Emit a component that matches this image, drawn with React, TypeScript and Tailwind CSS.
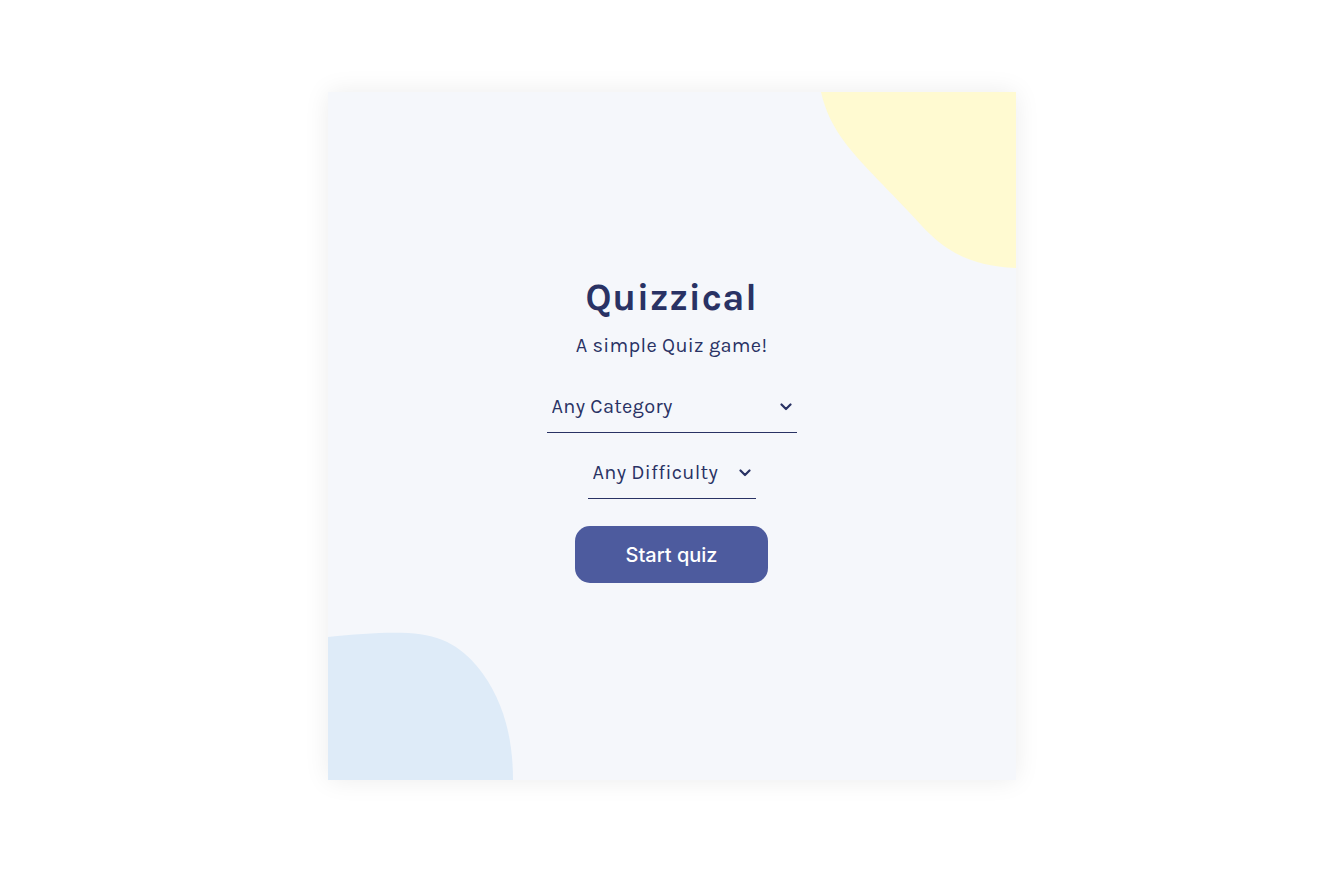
import React, { useState } from "react";

const categories = ["Any Category", "General Knowledge", "Books", "Film", "Music", "Science & Nature"];
const difficulties = ["Any Difficulty", "Easy", "Medium", "Hard"];

const Chevron = () => (
  <svg width="12" height="8" viewBox="0 0 12 8" className="pointer-events-none absolute right-[5px] top-[21px]">
    <path d="M1.5 1.5 L6 6 L10.5 1.5" fill="none" stroke="#293264" strokeWidth="2.2" strokeLinecap="round" strokeLinejoin="round" />
  </svg>
);

export default function App() {
  const [category, setCategory] = useState("Any Category");
  const [difficulty, setDifficulty] = useState("Any Difficulty");

  return (
    <div className="min-h-screen w-full bg-white flex items-center justify-center font-['Karla','Inter',sans-serif]">
      <div className="relative w-[688px] h-[688px] bg-[#F5F7FB] overflow-hidden shadow-[0_0_24px_rgba(0,0,0,0.08)] flex flex-col items-center justify-center">
        {/* Blobs */}
        <svg className="absolute top-0 right-0" width="195" height="176" viewBox="0 0 195 176">
          <path d="M0 0 H195 V176 C150 174 125 160 100 133 C70 100 40 72 25 52 C12 35 4 18 0 0 Z" fill="#FFFAD1" />
        </svg>
        <svg className="absolute bottom-0 left-0" width="186" height="148" viewBox="0 0 186 148">
          <path d="M0 5 C30 2 55 0 80 1 C115 3 135 15 155 42 C175 70 185 105 185 148 H0 Z" fill="#DEEBF8" />
        </svg>

        <div className="relative flex flex-col items-center pb-[10px]">
          <h1 className="text-[38px] font-bold text-[#293264] leading-none tracking-[0.6px]">Quizzical</h1>
          <p className="mt-[19px] text-[20px] text-[#293264] leading-none tracking-[0.3px]">A simple Quiz game!</p>

          <div className="relative mt-[26px] w-[250px] border-b border-[#293264]">
            <select
              value={category}
              onChange={(e) => setCategory(e.target.value)}
              className="block w-full appearance-none bg-transparent outline-none pl-[5px] pr-6 py-[13px] text-[20px] leading-[24px] text-[#293264] tracking-[0.3px] cursor-pointer"
            >
              {categories.map((c) => (
                <option key={c} value={c}>
                  {c}
                </option>
              ))}
            </select>
            <Chevron />
          </div>

          <div className="relative mt-[15px] w-[168px] border-b border-[#293264]">
            <select
              value={difficulty}
              onChange={(e) => setDifficulty(e.target.value)}
              className="block w-full appearance-none bg-transparent outline-none pl-[5px] pr-6 py-[13px] text-[20px] leading-[24px] text-[#293264] tracking-[0.3px] cursor-pointer"
            >
              {difficulties.map((d) => (
                <option key={d} value={d}>
                  {d}
                </option>
              ))}
            </select>
            <Chevron />
          </div>

          <button className="mt-[27px] w-[193px] h-[57px] rounded-[15px] bg-[#4D5B9E] text-white text-[20px] font-medium font-['Inter',sans-serif] cursor-pointer">
            Start quiz
          </button>
        </div>
      </div>
    </div>
  );
}
